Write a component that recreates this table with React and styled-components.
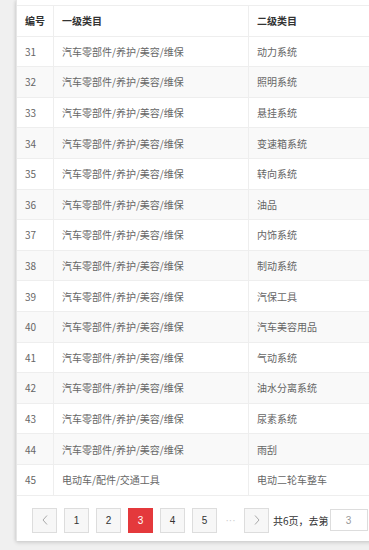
import React from "react";
import styled, { createGlobalStyle } from "styled-components";

const GlobalStyle = createGlobalStyle`
  html, body {
    margin: 0;
    padding: 0;
    background: #f0f0f0;
    overflow: hidden;
  }
  body {
    font-family: "Noto Sans CJK SC", "Noto Sans", sans-serif;
    font-size: 10px;
  }
`;

const rows = [
  [31, "汽车零部件/养护/美容/维保", "动力系统"],
  [32, "汽车零部件/养护/美容/维保", "照明系统"],
  [33, "汽车零部件/养护/美容/维保", "悬挂系统"],
  [34, "汽车零部件/养护/美容/维保", "变速箱系统"],
  [35, "汽车零部件/养护/美容/维保", "转向系统"],
  [36, "汽车零部件/养护/美容/维保", "油品"],
  [37, "汽车零部件/养护/美容/维保", "内饰系统"],
  [38, "汽车零部件/养护/美容/维保", "制动系统"],
  [39, "汽车零部件/养护/美容/维保", "汽保工具"],
  [40, "汽车零部件/养护/美容/维保", "汽车美容用品"],
  [41, "汽车零部件/养护/美容/维保", "气动系统"],
  [42, "汽车零部件/养护/美容/维保", "油水分离系统"],
  [43, "汽车零部件/养护/美容/维保", "尿素系统"],
  [44, "汽车零部件/养护/美容/维保", "雨刮"],
  [45, "电动车/配件/交通工具", "电动二轮车整车"],
];

const pages = [1, 2, 3, 4, 5];

const App = () => {
  return (
    <>
      <GlobalStyle />
      <StPage>
        <StCard>
          <StTable>
            <StRow $head>
              <StCell $head>编号</StCell>
              <StCell $head>一级类目</StCell>
              <StCell $head>二级类目</StCell>
            </StRow>
            {rows.map(([id, first, second], i) => (
              <StRow key={id} $stripe={i % 2 === 1}>
                <StCell>{id}</StCell>
                <StCell>{first}</StCell>
                <StCell>{second}</StCell>
              </StRow>
            ))}
          </StTable>
          <StPager>
            <StPageBtn>
              <svg width="8" height="12" viewBox="0 0 8 12">
                <path d="M6 1.5 L2 6 L6 10.5" fill="none" stroke="#aaa" strokeWidth="1" />
              </svg>
            </StPageBtn>
            {pages.map((p) => (
              <StPageBtn key={p} $active={p === 3}>
                {p}
              </StPageBtn>
            ))}
            <StEllipsis>···</StEllipsis>
            <StPageBtn>
              <svg width="8" height="12" viewBox="0 0 8 12">
                <path d="M2 1.5 L6 6 L2 10.5" fill="none" stroke="#aaa" strokeWidth="1" />
              </svg>
            </StPageBtn>
            <StPagerText>共6页，去第</StPagerText>
            <StJumpInput defaultValue="3" />
            <StPagerText $tight>页</StPagerText>
          </StPager>
        </StCard>
      </StPage>
    </>
  );
};

export default App;

const StPage = styled.div`
  padding-left: 16px;
  height: 550px;
`;

const StCard = styled.div`
  width: 620px;
  background: #fff;
  padding-top: 5px;
  box-shadow: 0 2px 4px rgba(0, 0, 0, 0.12), -1px 0 3px rgba(0, 0, 0, 0.08);
  border-left: 1px solid #e6e6e6;
  box-sizing: border-box;
`;

const StTable = styled.div`
  border-top: 1px solid #eee;
`;

const StRow = styled.div`
  display: grid;
  grid-template-columns: 37px 195px 1fr;
  height: 30.6px;
  box-sizing: border-box;
  border-bottom: 1px solid #eee;
  background: ${(p) => (p.$stripe ? "#f9f9f9" : "#fff")};
`;

const StCell = styled.div`
  display: flex;
  align-items: center;
  padding-left: 8px;
  border-right: 1px solid #eee;
  color: ${(p) => (p.$head ? "#333" : "#666")};
  font-weight: ${(p) => (p.$head ? 700 : 400)};
  white-space: nowrap;
`;

const StPager = styled.div`
  display: flex;
  align-items: center;
  gap: 7px;
  padding: 12px 0 8px 15px;
  height: 45px;
  box-sizing: border-box;
`;

const StPageBtn = styled.div`
  width: 25px;
  height: 25px;
  flex-shrink: 0;
  box-sizing: border-box;
  display: flex;
  align-items: center;
  justify-content: center;
  border: 1px solid ${(p) => (p.$active ? "#e4393c" : "#ddd")};
  background: ${(p) => (p.$active ? "#e4393c" : "#f7f7f7")};
  color: ${(p) => (p.$active ? "#fff" : "#333")};
  font-family: "Liberation Sans", Arial, sans-serif;
  font-size: 10px;
`;

const StEllipsis = styled.span`
  width: 13px;
  flex-shrink: 0;
  text-align: center;
  color: #ccc;
  font-family: "Liberation Sans", Arial, sans-serif;
  font-size: 10px;
`;

const StPagerText = styled.span`
  color: #333;
  font-size: 10px;
  margin-left: ${(p) => (p.$tight ? "-5px" : "-3px")};
  white-space: nowrap;
  flex-shrink: 0;
`;

const StJumpInput = styled.input`
  width: 38px;
  height: 22px;
  flex-shrink: 0;
  box-sizing: border-box;
  border: 1px solid #ddd;
  text-align: center;
  color: #999;
  font-size: 10px;
  font-family: "Liberation Sans", Arial, sans-serif;
  outline: none;
  padding: 0;
  margin-left: -6px;
`;
